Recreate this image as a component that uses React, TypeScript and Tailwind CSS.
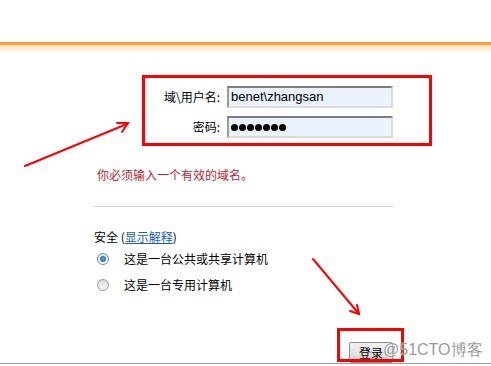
export default function App() {
  return (
    <div className="relative w-[491px] h-[366px] overflow-hidden bg-white text-[12px] leading-[16px] text-black font-['Noto_Sans_CJK_SC',sans-serif]">
      {/* header band */}
      <div className="h-[42px]" />
      <div className="h-[3px] bg-[#ff9d3b]" />
      <div className="h-[8px] bg-linear-to-b from-[#ffdcb0] to-white" />

      {/* credentials box */}
      <div className="pl-[142px] pt-[22px]">
        <div className="w-[290px] border-[3px] border-[#ff0000] pt-[8px] pb-[5px] flex flex-col gap-[8px]">
          <div className="flex items-center">
            <div className="w-[76px] text-right pr-[1px]">{"域\\用户名:"}</div>
            <div className="ml-[6px] w-[166px] h-[22px] bg-[#eaf3fd] border-2 border-t-[#7d7d7d] border-l-[#9a9a9a] border-r-[#dcdcdc] border-b-[#dcdcdc] flex items-center pl-[2px] font-['Liberation_Sans',sans-serif] text-[13px]">
              {"benet\\zhangsan"}
            </div>
          </div>
          <div className="flex items-center">
            <div className="w-[76px] text-right pr-[1px]">密码:</div>
            <div className="ml-[6px] w-[166px] h-[22px] bg-[#eaf3fd] border-2 border-t-[#7d7d7d] border-l-[#9a9a9a] border-r-[#dcdcdc] border-b-[#dcdcdc] flex items-center gap-[1px] pl-[2px]">
              {Array.from({ length: 7 }).map((_, i) => (
                <span key={i} className="w-[7px] h-[7px] rounded-full bg-black" />
              ))}
            </div>
          </div>
        </div>
      </div>

      {/* error message */}
      <div className="pl-[97px] mt-[21px] text-[#bd2334]">你必须输入一个有效的域名。</div>

      {/* separator */}
      <div className="ml-[94px] mt-[23px] w-[299px] h-px bg-[#d2d2d2]" />

      {/* security */}
      <div className="pl-[94px] mt-[22px]">
        安全 (<span className="text-[#1a5fb4] underline">显示解释</span>)
      </div>
      <div className="pl-[97px] mt-[4px] h-[20px] flex items-center">
        <span className="w-[12px] h-[12px] rounded-full border border-[#6f8ca3] bg-linear-to-b from-[#e4e4e4] to-[#ffffff] flex items-center justify-center">
          <span className="w-[6px] h-[6px] rounded-full bg-radial from-[#4fb3ee] to-[#0d5a93]" />
        </span>
        <span className="ml-[15px]">这是一台公共或共享计算机</span>
      </div>
      <div className="pl-[97px] mt-[6px] h-[20px] flex items-center">
        <span className="w-[12px] h-[12px] rounded-full border border-[#9c9c9c] bg-linear-to-b from-[#dcdcdc] to-[#f8f8f8]" />
        <span className="ml-[15px]">这是一台专用计算机</span>
      </div>

      {/* bottom button */}
      <div className="mt-[47px] pl-[349px]">
        <div className="w-[44px] h-[21px] rounded-[2px] border border-[#8e8f8f] bg-linear-to-b from-[#f2f2f2] to-[#d4d4d4] flex items-center justify-center">
          登录
        </div>
      </div>
      <div className="h-px bg-[#a0a0a0]" />

      {/* annotations */}
      <div className="absolute left-[337px] top-[328px] w-[67px] h-[34px] border-[3px] border-[#ff0000]" />
      <div className="absolute left-[383px] top-[340px] text-[16px] leading-[19px] text-[#9a9a9a] font-['Liberation_Sans',sans-serif] [text-shadow:0_0_2px_white]">
        @51CTO博客
      </div>
      <svg className="absolute left-0 top-0" width="491" height="366" viewBox="0 0 491 366">
        <g stroke="#ff0000" strokeWidth="2" fill="none" strokeLinecap="round">
          <path d="M25 166 L127 124" />
          <path d="M117 123 L128 123 L122 132" />
          <path d="M313 259 L359 314" />
          <path d="M350 311 L359 314 L357 305" />
        </g>
      </svg>
    </div>
  );
}
